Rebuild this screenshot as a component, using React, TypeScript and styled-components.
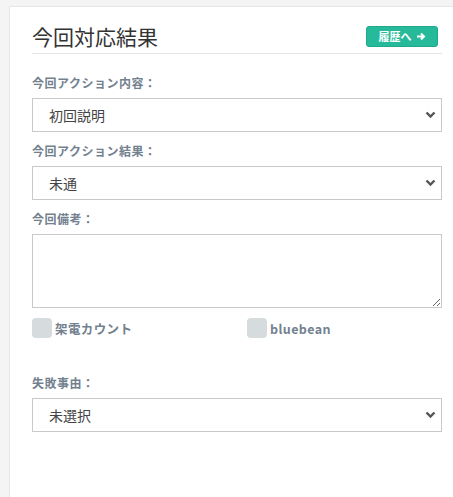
import { createGlobalStyle } from 'styled-components';
import styled from 'styled-components';

const GlobalStyle = createGlobalStyle`
  html, body {
    margin: 0;
    padding: 0;
    background: #f4f4f4;
    overflow: hidden;
  }
  body {
    font-family: 'Noto Sans CJK JP', 'Noto Sans', sans-serif;
  }
`;

const Card = styled.section`
  margin: 6px 0 0 9px;
  width: calc(100vw - 9px);
  height: calc(100vh - 6px);
  box-sizing: border-box;
  background: #fff;
  border: 1px solid #e6e6e6;
  border-right: none;
  border-bottom: none;
  padding: 14px 0 0 22px;
`;

const Content = styled.div`
  width: 410px;
`;

const Header = styled.div`
  display: flex;
  align-items: center;
  justify-content: space-between;
  padding-bottom: 2px;
  border-bottom: 1px solid #e5e5e5;
  margin-bottom: 20px;
`;

const Title = styled.h2`
  margin: 0;
  font-size: 21px;
  font-weight: 400;
  line-height: 30px;
  color: #333;
`;

const HistoryButton = styled.button`
  display: flex;
  align-items: center;
  gap: 4px;
  height: 21px;
  width: 72px;
  margin-right: 4px;
  justify-content: center;
  padding: 0;
  background: #26b99a;
  border: 1px solid #1fa88a;
  border-radius: 3px;
  color: #fff;
  font-family: inherit;
  font-size: 11px;
  font-weight: 700;
  line-height: 1;
`;

const Field = styled.div<{ $gap?: number }>`
  margin-top: ${(p) => p.$gap ?? 0}px;
`;

const Label = styled.label`
  display: block;
  font-size: 12px;
  font-weight: 700;
  letter-spacing: 0.5px;
  color: #73818f;
  line-height: 18px;
  margin-bottom: 6px;
`;

const SelectWrap = styled.div`
  position: relative;
`;

const Select = styled.select`
  appearance: none;
  display: block;
  width: 100%;
  height: 34px;
  box-sizing: border-box;
  border: 1px solid #c9c9c9;
  border-radius: 0;
  background: #fff;
  padding: 0 16px;
  font-family: inherit;
  font-size: 14px;
  color: #444;
`;

const Chevron = styled.svg`
  position: absolute;
  right: 6px;
  top: 13px;
  pointer-events: none;
`;

const TextArea = styled.textarea`
  display: block;
  width: 100%;
  height: 74px;
  box-sizing: border-box;
  border: 1px solid #c9c9c9;
  border-radius: 0;
  margin: 0;
  font-family: inherit;
  font-size: 14px;
`;

const CheckRow = styled.div`
  display: grid;
  grid-template-columns: 215px 1fr;
  margin-top: 10px;
`;

const Check = styled.label`
  display: flex;
  align-items: center;
  gap: 3px;
  font-size: 12.5px;
  font-weight: 700;
  color: #73818f;
  letter-spacing: 0.4px;
`;

const Box = styled.span`
  width: 20px;
  height: 20px;
  border-radius: 4px;
  background: #d6dbde;
`;

function Dropdown({ value }: { value: string }) {
  return (
    <SelectWrap>
      <Select defaultValue={value}>
        <option>{value}</option>
      </Select>
      <Chevron width="11" height="8" viewBox="0 0 11 8">
        <path d="M1.5 1.5 L5.5 5.5 L9.5 1.5" fill="none" stroke="#555" strokeWidth="2.4" />
      </Chevron>
    </SelectWrap>
  );
}

export default function App() {
  return (
    <>
      <GlobalStyle />
      <Card>
        <Content>
          <Header>
            <Title>今回対応結果</Title>
            <HistoryButton>
              履歴へ
              <svg width="10" height="9" viewBox="0 0 10 9">
                <path d="M1 4.5 H8 M5 1.5 L8 4.5 L5 7.5" fill="none" stroke="#fff" strokeWidth="2" />
              </svg>
            </HistoryButton>
          </Header>
          <Field>
            <Label>今回アクション内容：</Label>
            <Dropdown value="初回説明" />
          </Field>
          <Field $gap={10}>
            <Label>今回アクション結果：</Label>
            <Dropdown value="未通" />
          </Field>
          <Field $gap={10}>
            <Label>今回備考：</Label>
            <TextArea />
          </Field>
          <CheckRow>
            <Check>
              <Box />
              架電カウント
            </Check>
            <Check>
              <Box />
              bluebean
            </Check>
          </CheckRow>
          <Field $gap={36}>
            <Label>失敗事由：</Label>
            <Dropdown value="未選択" />
          </Field>
        </Content>
      </Card>
    </>
  );
}
